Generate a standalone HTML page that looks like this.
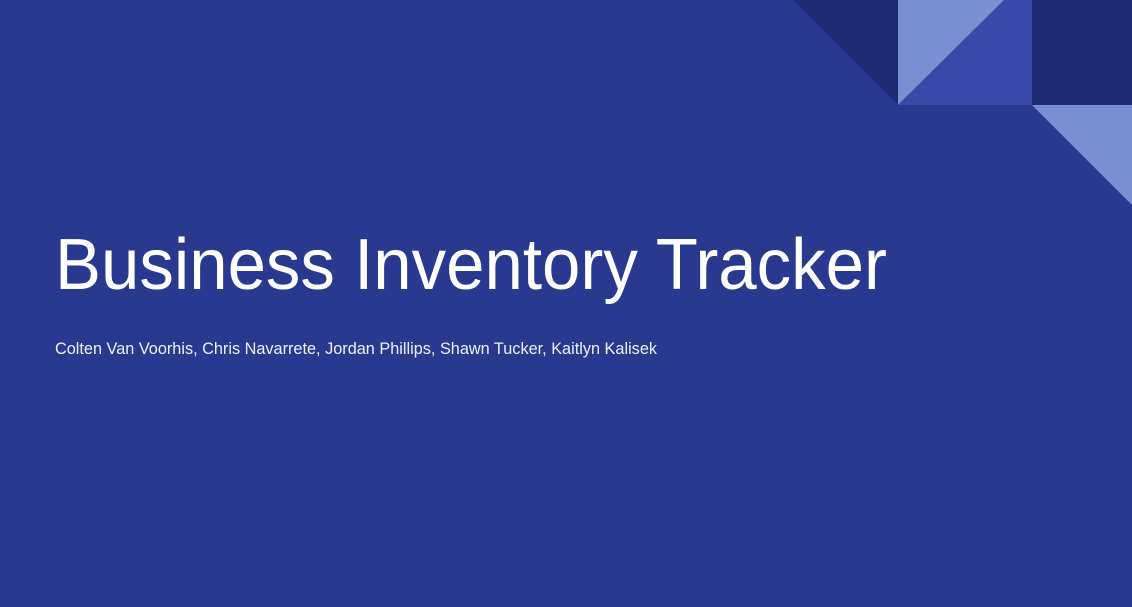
<!DOCTYPE html>
<html><head><meta charset="utf-8"><style>
html,body{margin:0;padding:0;width:1132px;height:607px;overflow:hidden;background:#29398f;}
</style></head><body>
<svg width="1132" height="607" viewBox="0 0 1132 607" xmlns="http://www.w3.org/2000/svg" style="display:block">
<rect width="1132" height="607" fill="#29398f"/>
<polygon points="793,0 898,0 898,105" fill="#212b74"/>
<polygon points="898,0 1004,0 898,105" fill="#7a8fcf"/>
<polygon points="1004,0 1032,0 1032,105 898,105" fill="#3a49a9"/>
<rect x="1032" y="0" width="100" height="105" fill="#212b74"/>
<polygon points="1032,105 1132,105 1132,205" fill="#7a8fcf"/>
<text x="55" y="289" font-family="Liberation Sans, sans-serif" font-size="72" fill="#ffffff" textLength="832" lengthAdjust="spacingAndGlyphs">Business Inventory Tracker</text>
<text x="55" y="354" font-family="Liberation Sans, sans-serif" font-size="16.5" fill="#eef0f8" textLength="602" lengthAdjust="spacingAndGlyphs">Colten Van Voorhis, Chris Navarrete, Jordan Phillips, Shawn Tucker, Kaitlyn Kalisek</text>
</svg>
</body></html>
